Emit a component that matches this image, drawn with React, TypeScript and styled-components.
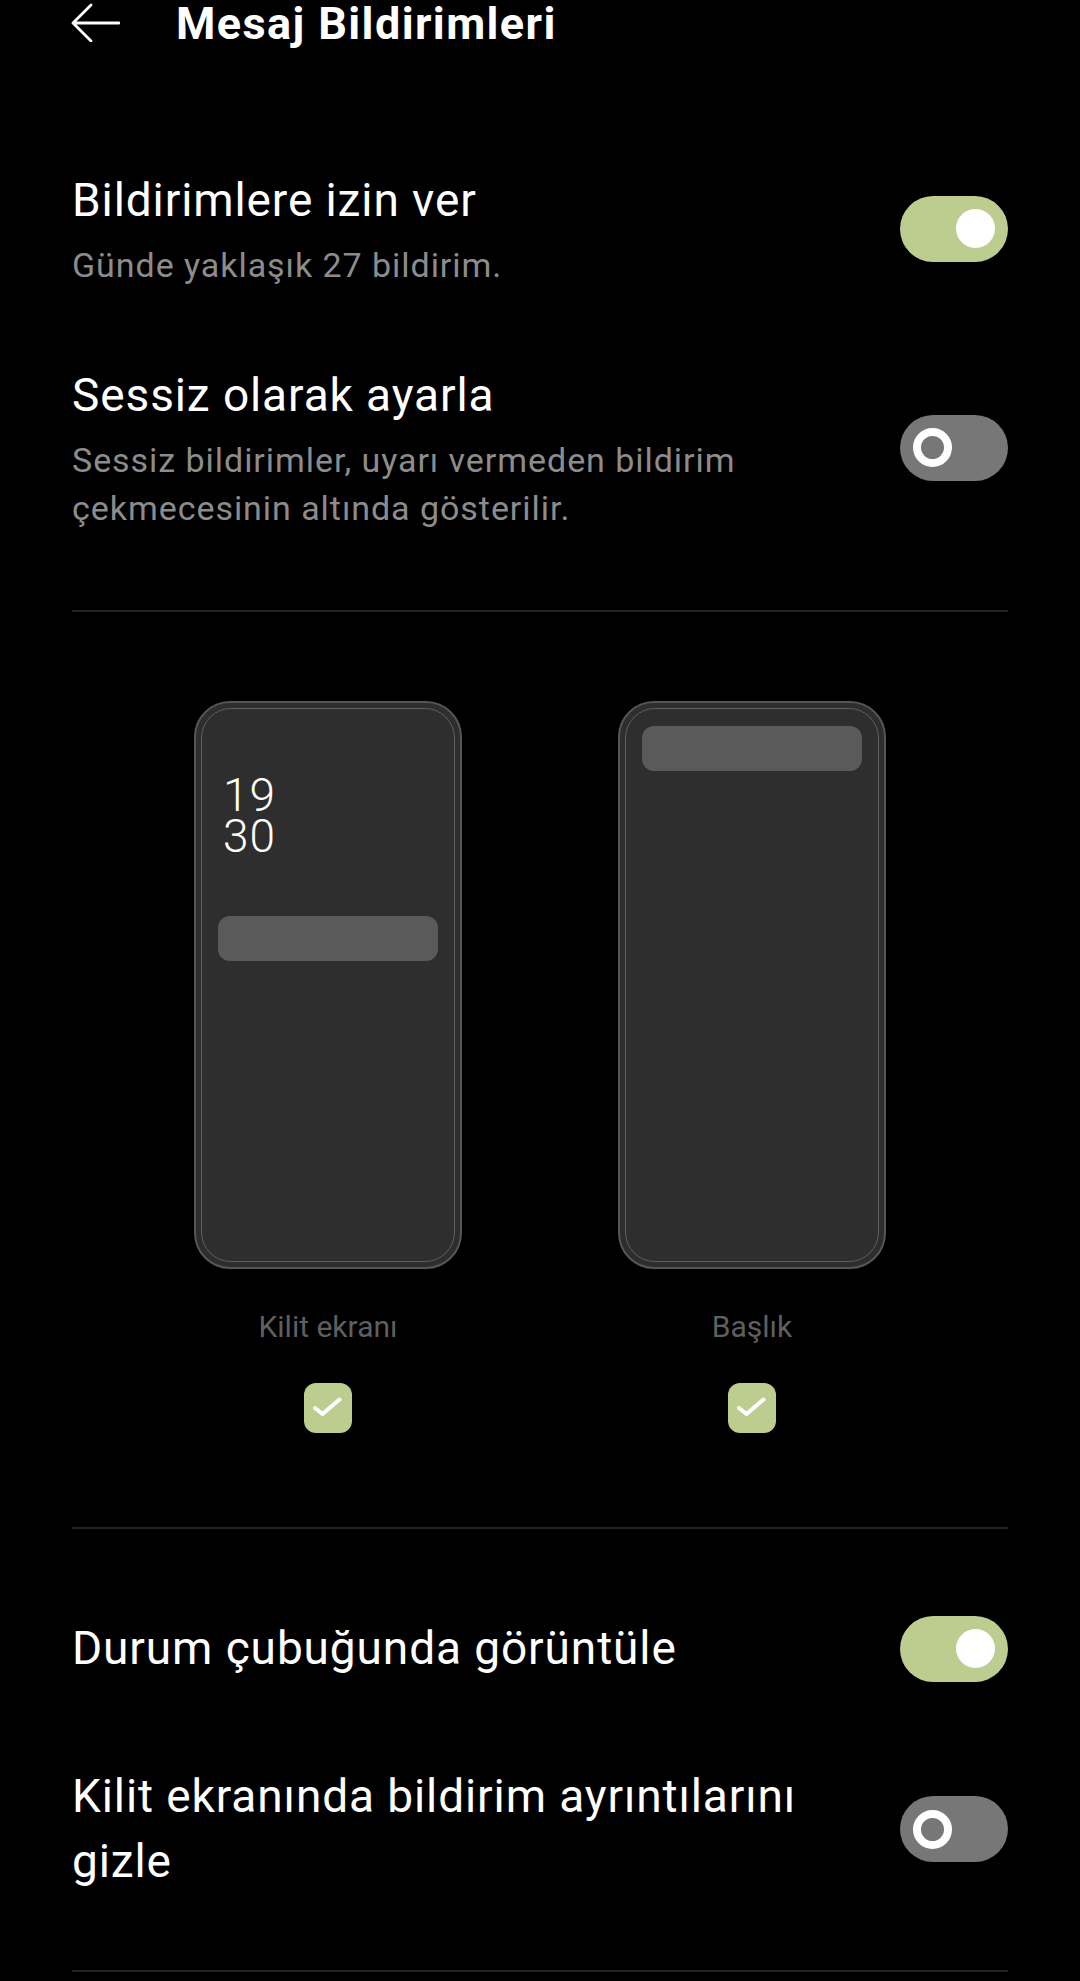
import React from "react";
import styled, { createGlobalStyle } from "styled-components";

const GlobalStyle = createGlobalStyle`
  html, body {
    margin: 0;
    padding: 0;
    background: #000;
  }
  body {
    font-family: Roboto, "Noto Sans", "Liberation Sans", sans-serif;
    color: #fff;
    -webkit-font-smoothing: antialiased;
  }
  * { box-sizing: border-box; }
`;

const GREEN = "#bccd8f";

const Page = styled.div`
  width: 1080px;
  min-height: 1981px;
  padding: 0 72px;
  background: #000;
  display: flex;
  flex-direction: column;
`;

const Header = styled.header`
  height: 47px;
  display: flex;
  align-items: center;
  gap: 56px;
  margin-left: -2px;
`;

const BackIcon = styled.svg`
  width: 50px;
  height: 40px;
  margin-top: -4px;
  flex: none;
`;

const Title = styled.h1`
  margin: 0;
  font-size: 45px;
  line-height: 45px;
  font-weight: 700;
  color: #fff;
  letter-spacing: 1.4px;
`;

const List = styled.div<{ $top: number }>`
  display: flex;
  flex-direction: column;
  padding-top: ${(p) => p.$top}px;
`;

const Row = styled.div`
  display: flex;
  align-items: center;
  justify-content: space-between;
  gap: 40px;
  padding: 37px 0;
  min-height: 157px;
`;

const RowText = styled.div`
  flex: 1;
  display: flex;
  flex-direction: column;
`;

const RowTitle = styled.div`
  font-size: 46px;
  line-height: 65px;
  font-weight: 400;
  color: #fff;
  letter-spacing: 0.9px;
`;

const RowSub = styled.div`
  margin-top: 8px;
  font-size: 34px;
  line-height: 48px;
  color: #8c8c8c;
  letter-spacing: 0.95px;
`;

const Track = styled.div<{ $on: boolean }>`
  flex: none;
  width: 108px;
  height: 66px;
  border-radius: 33px;
  background: ${(p) => (p.$on ? GREEN : "#777777")};
  display: flex;
  align-items: center;
  justify-content: ${(p) => (p.$on ? "flex-end" : "flex-start")};
  padding: 0 13px;
`;

const Knob = styled.div<{ $on: boolean }>`
  width: 39px;
  height: 39px;
  border-radius: 50%;
  background: ${(p) => (p.$on ? "#fff" : "transparent")};
  border: ${(p) => (p.$on ? "none" : "8px solid #fff")};
`;

const Divider = styled.div<{ $top: number }>`
  height: 2px;
  background: #222222;
  margin-top: ${(p) => p.$top}px;
  flex: none;
`;

const Previews = styled.div`
  display: flex;
  justify-content: center;
  gap: 156px;
  padding-top: 89px;
`;

const Preview = styled.div`
  width: 268px;
  display: flex;
  flex-direction: column;
  align-items: center;
`;

const Phone = styled.div`
  width: 268px;
  height: 568px;
  border: 2px solid #555555;
  border-radius: 36px;
  background: #2e2e2e;
  padding: 5px;
  display: flex;
`;

const Screen = styled.div`
  flex: 1;
  border: 1.5px solid #606060;
  border-radius: 30px;
  padding: 17px 16px;
  display: flex;
  flex-direction: column;
`;

const Clock = styled.div`
  margin-top: 49px;
  margin-left: 5px;
  display: flex;
  flex-direction: column;
`;

const ClockLine = styled.span`
  display: block;
  height: 41px;
  font-size: 46px;
  line-height: 41px;
  font-weight: 300;
  color: #fff;
  letter-spacing: 1px;
`;

const NoticeBar = styled.div<{ $top: number }>`
  margin-top: ${(p) => p.$top}px;
  height: 45px;
  border-radius: 12px;
  background: #5a5a5a;
`;

const PreviewLabel = styled.div`
  margin-top: 38px;
  font-size: 30px;
  line-height: 40px;
  color: #5f5f5f;
`;

const CheckBox = styled.div`
  margin-top: 36px;
  width: 48px;
  height: 50px;
  border-radius: 12px;
  background: ${GREEN};
  display: flex;
`;

const Toggle = ({ on }: { on: boolean }) => (
  <Track $on={on}>
    <Knob $on={on} />
  </Track>
);

const Check = () => (
  <CheckBox>
    <svg width="48" height="50" viewBox="0 0 48 50">
      <polyline
        points="11,25 18.5,31 35.5,16.5"
        fill="none"
        stroke="#fff"
        strokeWidth="4"
        strokeLinecap="round"
        strokeLinejoin="round"
      />
    </svg>
  </CheckBox>
);

type Setting = { title: string; sub?: string; on: boolean };

const top: Setting[] = [
  { title: "Bildirimlere izin ver", sub: "Günde yaklaşık 27 bildirim.", on: true },
  {
    title: "Sessiz olarak ayarla",
    sub: "Sessiz bildirimler, uyarı vermeden bildirim çekmecesinin altında gösterilir.",
    on: false,
  },
];

const bottom: Setting[] = [
  { title: "Durum çubuğunda görüntüle", on: true },
  { title: "Kilit ekranında bildirim ayrıntılarını gizle", on: false },
];

const SettingRow = ({ s }: { s: Setting }) => (
  <Row>
    <RowText>
      <RowTitle>{s.title}</RowTitle>
      {s.sub && <RowSub>{s.sub}</RowSub>}
    </RowText>
    <Toggle on={s.on} />
  </Row>
);

export default function App() {
  return (
    <>
      <GlobalStyle />
      <Page>
        <Header>
          <BackIcon viewBox="0 0 50 40">
            <path
              d="M3 21 H49 M3 21 L21 3 M3 21 L21 39"
              fill="none"
              stroke="#fff"
              strokeWidth="2.8"
              strokeLinecap="round"
              strokeLinejoin="round"
            />
          </BackIcon>
          <Title>Mesaj Bildirimleri</Title>
        </Header>

        <List $top={84}>
          {top.map((s) => (
            <SettingRow key={s.title} s={s} />
          ))}
        </List>

        <Divider $top={41} />

        <Previews>
          <Preview>
            <Phone>
              <Screen>
                <Clock>
                  <ClockLine>19</ClockLine>
                  <ClockLine>30</ClockLine>
                </Clock>
                <NoticeBar $top={59} />
              </Screen>
            </Phone>
            <PreviewLabel>Kilit ekranı</PreviewLabel>
            <Check />
          </Preview>
          <Preview>
            <Phone>
              <Screen>
                <NoticeBar $top={0} />
              </Screen>
            </Phone>
            <PreviewLabel>Başlık</PreviewLabel>
            <Check />
          </Preview>
        </Previews>

        <Divider $top={94} />

        <List $top={41}>
          {bottom.map((s) => (
            <SettingRow key={s.title} s={s} />
          ))}
        </List>

        <Divider $top={39} />
      </Page>
    </>
  );
}
